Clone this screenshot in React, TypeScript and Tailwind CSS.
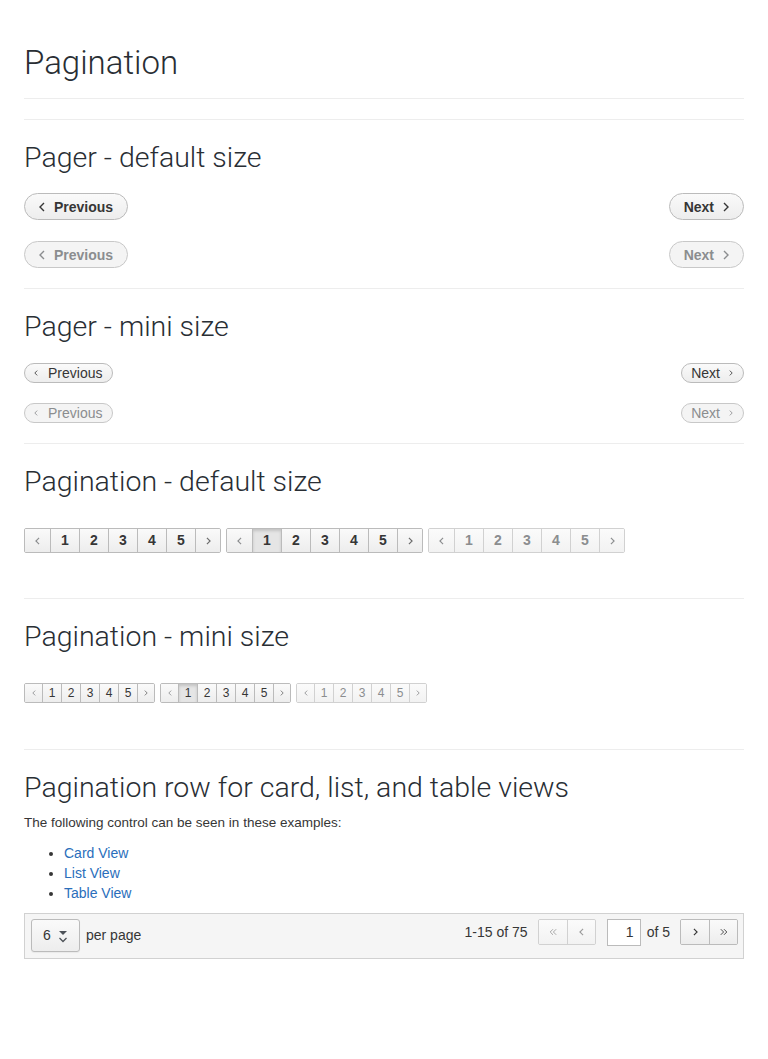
import React from "react";

const Chev = ({ dir, className = "" }: { dir: "left" | "right"; className?: string }) => (
  <svg viewBox="0 0 6 10" className={className} fill="none" stroke="currentColor" strokeWidth="1.4">
    {dir === "left" ? <path d="M5 1 1 5l4 4" /> : <path d="M1 1l4 4-4 4" />}
  </svg>
);

const DblChev = ({ dir, className = "" }: { dir: "left" | "right"; className?: string }) => (
  <svg viewBox="0 0 10 10" className={className} fill="none" stroke="currentColor" strokeWidth="1.1">
    {dir === "left" ? (
      <>
        <path d="M5 1.5 1.5 5 5 8.5" />
        <path d="M9 1.5 5.5 5 9 8.5" />
      </>
    ) : (
      <>
        <path d="M1 1.5 4.5 5 1 8.5" />
        <path d="M5 1.5 8.5 5 5 8.5" />
      </>
    )}
  </svg>
);

function PagerBtn({ dir, disabled, mini }: { dir: "left" | "right"; disabled?: boolean; mini?: boolean }) {
  const tone = disabled
    ? "border-[#c8c8c8] bg-[#f4f4f4] text-[#8b8d8f]"
    : "border-[#bbb] bg-gradient-to-b from-[#fafafa] to-[#ededed] text-[#363636]";
  if (mini) {
    return (
      <span className={`inline-flex h-[20px] items-center rounded-full border pl-[9px] pr-[10px] text-[14px] leading-none ${tone}`}>
        {dir === "left" && <Chev dir="left" className="mr-[10px] h-[6px] w-[4px]" />}
        <span>{dir === "left" ? "Previous" : "Next"}</span>
        {dir === "right" && <Chev dir="right" className="ml-[9px] h-[6px] w-[4px]" />}
      </span>
    );
  }
  return (
    <span className={`inline-flex h-[27px] items-center rounded-full border px-[14px] text-[14px] font-bold leading-none ${tone}`}>
      {dir === "left" && <Chev dir="left" className="mr-[9px] h-[10px] w-[6px]" />}
      <span>{dir === "left" ? "Previous" : "Next"}</span>
      {dir === "right" && <Chev dir="right" className="ml-[9px] h-[10px] w-[6px]" />}
    </span>
  );
}

function Pagination({ variant, mini }: { variant: "normal" | "active" | "disabled"; mini?: boolean }) {
  const disabled = variant === "disabled";
  const border = disabled ? "border-[#d1d1d1]" : "border-[#bbb]";
  const text = disabled ? "text-[#8b8d8f]" : "text-[#363636]";
  const h = mini ? "h-[18px]" : "h-[23px]";
  const numW = mini ? "w-[19px]" : "w-[29px]";
  const arrW = mini ? "w-[17px]" : "w-[25px]";
  const item = `flex items-center justify-center ${h} bg-gradient-to-b ${
    disabled ? "from-[#fbfbfb] to-[#f2f2f2]" : "from-[#fafafa] to-[#ededed]"
  }`;
  const divide = `border-l ${border}`;
  return (
    <div className={`flex overflow-hidden rounded-[2px] border ${border} ${text} ${mini ? "text-[12px]" : "text-[14px] font-bold"}`}>
      <span className={`${item} ${arrW} text-[#8b8d8f]`}>
        <Chev dir="left" className={mini ? "h-[6px] w-[4px]" : "h-[8px] w-[5px]"} />
      </span>
      {[1, 2, 3, 4, 5].map((n) => {
        const active = variant === "active" && n === 1;
        return (
          <span
            key={n}
            className={`${divide} ${numW} ${
              active
                ? `flex items-center justify-center ${h} bg-[#e5e5e5] shadow-[inset_0_2px_3px_rgba(0,0,0,0.15)]`
                : item
            }`}
          >
            {n}
          </span>
        );
      })}
      <span className={`${item} ${divide} ${arrW} ${disabled ? "text-[#8b8d8f]" : "text-[#6a6a6a]"}`}>
        <Chev dir="right" className={mini ? "h-[6px] w-[4px]" : "h-[8px] w-[5px]"} />
      </span>
    </div>
  );
}

const H2 = ({ children }: { children: React.ReactNode }) => (
  <h2 className="font-['Roboto',sans-serif] text-[28.5px] font-light leading-[36px] text-[#292e34]">{children}</h2>
);

export default function App() {
  return (
    <div className="min-h-[1059px] bg-white px-6 font-['Liberation_Sans',Arial,sans-serif] text-[#363636]">
      <div className="border-b border-[#ededed] pt-[43px] pb-[15px]">
        <h1 className="font-['Roboto',sans-serif] text-[33px] font-light leading-[40px] text-[#292e34]">Pagination</h1>
      </div>

      <section className="mt-[20px] border-t border-[#ededed] pt-[20px] pb-[20px]">
        <H2>Pager - default size</H2>
        <div className="mt-[17px] flex justify-between">
          <PagerBtn dir="left" />
          <PagerBtn dir="right" />
        </div>
        <div className="mt-[21px] flex justify-between">
          <PagerBtn dir="left" disabled />
          <PagerBtn dir="right" disabled />
        </div>
      </section>

      <section className="border-t border-[#ededed] pt-[20px] pb-[20px]">
        <H2>Pager - mini size</H2>
        <div className="mt-[18px] flex justify-between">
          <PagerBtn dir="left" mini />
          <PagerBtn dir="right" mini />
        </div>
        <div className="mt-[20px] flex justify-between">
          <PagerBtn dir="left" mini disabled />
          <PagerBtn dir="right" mini disabled />
        </div>
      </section>

      <section className="border-t border-[#ededed] pt-[20px] pb-[45px]">
        <H2>Pagination - default size</H2>
        <div className="mt-[28px] flex gap-[5px]">
          <Pagination variant="normal" />
          <Pagination variant="active" />
          <Pagination variant="disabled" />
        </div>
      </section>

      <section className="border-t border-[#ededed] pt-[20px] pb-[46px]">
        <H2>Pagination - mini size</H2>
        <div className="mt-[28px] flex gap-[5px]">
          <Pagination variant="normal" mini />
          <Pagination variant="active" mini />
          <Pagination variant="disabled" mini />
        </div>
      </section>

      <section className="border-t border-[#ededed] pt-[20px]">
        <H2>Pagination row for card, list, and table views</H2>
        <p className="mt-[7px] text-[13.5px] leading-[20px]">The following control can be seen in these examples:</p>
        <ul className="mt-[10px] list-disc pl-[40px] text-[14px] leading-[20px] marker:text-[#363636]">
          <li className="text-[#2a6ebb]">Card View</li>
          <li className="text-[#2a6ebb]">List View</li>
          <li className="text-[#2a6ebb]">Table View</li>
        </ul>

        <div className="mt-[10px] flex h-[46px] items-start justify-between border border-[#d1d1d1] bg-[#f5f5f5] pl-[6px] pr-[5px] pt-[5px]">
          <div className="flex items-center">
            <span className="flex h-[33px] w-[49px] items-center rounded-[3px] border border-[#bbb] bg-gradient-to-b from-[#fafafa] to-[#ededed] pl-[11px] text-[14px] shadow-[0_1px_1px_rgba(0,0,0,0.05)]">
              6
              <svg viewBox="0 0 10 14" className="ml-[7px] mt-[3px] h-[14px] w-[10px]">
                <path d="M1 1h8L5 5z" fill="#4d5258" />
                <path d="M1.5 8 5 11.5 8.5 8" fill="none" stroke="#4d5258" strokeWidth="1.3" />
              </svg>
            </span>
            <span className="ml-[6px] text-[14px]">per page</span>
          </div>

          <div className="flex items-start">
            <span className="mr-[10px] text-[14px] leading-[26px]">1-15 of 75</span>
            <div className="flex h-[26px] overflow-hidden rounded-[2px] border border-[#d1d1d1] text-[#9c9c9c]">
              <span className="flex w-[28px] items-center justify-center bg-gradient-to-b from-[#fbfbfb] to-[#f2f2f2]">
                <DblChev dir="left" className="h-[8px] w-[8px]" />
              </span>
              <span className="flex w-[28px] items-center justify-center border-l border-[#d1d1d1] bg-gradient-to-b from-[#fbfbfb] to-[#f2f2f2]">
                <Chev dir="left" className="h-[8px] w-[5px]" />
              </span>
            </div>
            <span className="ml-[11px] flex h-[27px] w-[34px] items-center justify-end border border-[#bbb] bg-white pr-[6px] text-[14px]">
              1
            </span>
            <span className="ml-[6px] text-[14px] leading-[26px]">of 5</span>
            <div className="ml-[10px] flex h-[26px] overflow-hidden rounded-[2px] border border-[#bbb] text-[#363636]">
              <span className="flex w-[28px] items-center justify-center bg-gradient-to-b from-[#fafafa] to-[#ededed]">
                <Chev dir="right" className="h-[8px] w-[5px]" />
              </span>
              <span className="flex w-[28px] items-center justify-center border-l border-[#bbb] bg-gradient-to-b from-[#fafafa] to-[#ededed]">
                <DblChev dir="right" className="h-[8px] w-[8px]" />
              </span>
            </div>
          </div>
        </div>
      </section>
    </div>
  );
}
